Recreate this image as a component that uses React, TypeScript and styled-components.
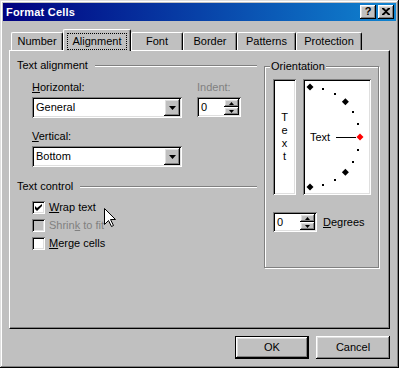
import styled, { createGlobalStyle } from "styled-components";

const GlobalStyle = createGlobalStyle`
  html, body {
    margin: 0;
    padding: 0;
    background: #c0c0c0;
  }
  body {
    font-family: "Liberation Sans", Arial, sans-serif;
    font-size: 11px;
  }
`;

const TABS = [
  { label: "Number", width: 52 },
  { label: "Alignment", width: 68, active: true },
  { label: "Font", width: 52 },
  { label: "Border", width: 54 },
  { label: "Patterns", width: 59 },
  { label: "Protection", width: 66 },
];

// dial marks every 15 degrees, from top (-90) to bottom (+90)
const DIAL = { cx: 5, cy: 56, r: 50 };
const marks = Array.from({ length: 13 }, (_, i) => {
  const a = ((-90 + i * 15) * Math.PI) / 180;
  return {
    x: DIAL.cx + DIAL.r * Math.cos(a),
    y: DIAL.cy + DIAL.r * Math.sin(a),
    big: i % 3 === 0,
    red: i === 6,
  };
});

export default function App() {
  return (
    <>
      <GlobalStyle />
      <Window>
        <TitleBar>
          <Title>Format Cells</Title>
          <TitleButtons>
            <TitleButton>?</TitleButton>
            <TitleButton>
              <svg width="8" height="7" viewBox="0 0 8 7">
                <path d="M0 0h2l2 2 2-2h2v1L5 3.5 8 6v1H6L4 5 2 7H0V6l3-2.5L0 1z" fill="#000" />
              </svg>
            </TitleButton>
          </TitleButtons>
        </TitleBar>

        <Body>
          <TabRow>
            {TABS.map((t) => (
              <Tab key={t.label} $width={t.width} $active={!!t.active}>
                {t.active ? <Focus>{t.label}</Focus> : t.label}
              </Tab>
            ))}
          </TabRow>

          <Panel>
            <LeftCol>
              <SectionHeader>
                <span>Text alignment</span>
                <Rule />
              </SectionHeader>

              <FieldsRow>
                <Field>
                  <Label>
                    <u>H</u>orizontal:
                  </Label>
                  <Select $width={150}>
                    <SelectText>General</SelectText>
                    <DropButton>
                      <svg width="7" height="4" viewBox="0 0 7 4">
                        <polygon points="0,0 7,0 3.5,4" fill="#000" />
                      </svg>
                    </DropButton>
                  </Select>
                </Field>
                <Field>
                  <Label $disabled>Indent:</Label>
                  <Spin value="0" />
                </Field>
              </FieldsRow>

              <Field $top={12}>
                <Label>
                  <u>V</u>ertical:
                </Label>
                <Select $width={150}>
                  <SelectText>Bottom</SelectText>
                  <DropButton>
                    <svg width="7" height="4" viewBox="0 0 7 4">
                      <polygon points="0,0 7,0 3.5,4" fill="#000" />
                    </svg>
                  </DropButton>
                </Select>
              </Field>

              <SectionHeader $top={13}>
                <span>Text control</span>
                <Rule />
              </SectionHeader>

              <CheckList>
                <CheckRow>
                  <CheckBox>
                    <svg width="7" height="7" viewBox="0 0 7 7">
                      <path d="M0 2v3l2 2 5-5V-0L2 4z" fill="#000" />
                    </svg>
                  </CheckBox>
                  <span>
                    <u>W</u>rap text
                  </span>
                </CheckRow>
                <CheckRow $disabled>
                  <CheckBox $disabled />
                  <span>
                    Shrin<u>k</u> to fit
                  </span>
                </CheckRow>
                <CheckRow>
                  <CheckBox />
                  <span>
                    <u>M</u>erge cells
                  </span>
                </CheckRow>
              </CheckList>
            </LeftCol>

            <GroupBox>
              <Legend>Orientation</Legend>
              <OrientRow>
                <VerticalBox>
                  <span>T</span>
                  <span>e</span>
                  <span>x</span>
                  <span>t</span>
                </VerticalBox>
                <DialBox>
                  <svg width="64" height="112" viewBox="0 0 64 112">
                    {marks.map((m, i) =>
                      m.big ? (
                        <polygon
                          key={i}
                          points={`${m.x},${m.y - 3.5} ${m.x + 3.5},${m.y} ${m.x},${m.y + 3.5} ${m.x - 3.5},${m.y}`}
                          fill={m.red ? "#ff0000" : "#000"}
                        />
                      ) : (
                        <rect key={i} x={Math.round(m.x) - 1} y={Math.round(m.y) - 1} width="2" height="2" fill="#000" />
                      )
                    )}
                    <text
                      x="5"
                      y="60"
                      fontFamily="Liberation Sans, Arial, sans-serif"
                      fontSize="11"
                      fill="#000"
                    >
                      Text
                    </text>
                    <rect x="31" y="56" width="20" height="1" fill="#000" />
                  </svg>
                </DialBox>
              </OrientRow>
              <DegreesRow>
                <Spin value="0" />
                <span>
                  <u>D</u>egrees
                </span>
              </DegreesRow>
            </GroupBox>
          </Panel>

          <ButtonRow>
            <PushButton $default>OK</PushButton>
            <PushButton>Cancel</PushButton>
          </ButtonRow>
        </Body>

        <Cursor width="12" height="19" viewBox="0 0 12 19">
          <path
            d="M0.5 0.5V16.5L4.5 12.5L7.5 18.5L9.5 17.5L6.5 11.5H11.5Z"
            fill="#fff"
            stroke="#000"
            strokeWidth="1"
          />
        </Cursor>
      </Window>
    </>
  );
}

function Spin({ value }: { value: string }) {
  return (
    <SpinField>
      <SpinText>{value}</SpinText>
      <SpinButtons>
        <SpinButton>
          <svg width="5" height="3" viewBox="0 0 5 3">
            <polygon points="2.5,0 5,3 0,3" fill="#000" />
          </svg>
        </SpinButton>
        <SpinButton>
          <svg width="5" height="3" viewBox="0 0 5 3">
            <polygon points="0,0 5,0 2.5,3" fill="#000" />
          </svg>
        </SpinButton>
      </SpinButtons>
    </SpinField>
  );
}

const raised = `
  background: #c0c0c0;
  box-shadow: inset -1px -1px #000, inset 1px 1px #fff,
    inset -2px -2px #808080, inset 2px 2px #dfdfdf;
`;

const sunken = `
  box-shadow: inset 1px 1px #808080, inset -1px -1px #fff,
    inset 2px 2px #000, inset -2px -2px #dfdfdf;
`;

const Window = styled.div`
  position: relative;
  width: 399px;
  height: 368px;
  box-sizing: border-box;
  padding: 3px;
  display: flex;
  flex-direction: column;
  background: #c0c0c0;
  color: #000;
  font-family: "Liberation Sans", Arial, sans-serif;
  font-size: 11px;
  line-height: 13px;
  box-shadow: inset -1px -1px #000, inset 1px 1px #dfdfdf,
    inset -2px -2px #808080, inset 2px 2px #fff;
  overflow: hidden;
`;

const TitleBar = styled.div`
  height: 18px;
  flex: none;
  display: flex;
  align-items: center;
  padding: 0 2px 0 3px;
  background: linear-gradient(to right, #000080, #1084d0);
`;

const Title = styled.div`
  color: #fff;
  font-weight: bold;
  font-size: 11px;
  letter-spacing: 0.2px;
`;

const TitleButtons = styled.div`
  margin-left: auto;
  display: flex;
  gap: 2px;
`;

const TitleButton = styled.div`
  width: 16px;
  height: 14px;
  box-sizing: border-box;
  display: flex;
  align-items: center;
  justify-content: center;
  font-weight: bold;
  font-size: 11px;
  padding-bottom: 1px;
  ${raised}
`;

const Body = styled.div`
  flex: 1;
  display: flex;
  flex-direction: column;
  padding: 7px 6px 6px;
`;

const TabRow = styled.div`
  height: 22px;
  display: flex;
  align-items: flex-end;
  padding-left: 2px;
  position: relative;
  z-index: 1;
`;

const Tab = styled.div<{ $width: number; $active: boolean }>`
  width: ${(p) => p.$width}px;
  height: ${(p) => (p.$active ? 22 : 18)}px;
  margin-bottom: ${(p) => (p.$active ? -1 : 0)}px;
  padding-top: ${(p) => (p.$active ? 1 : 0)}px;
  box-sizing: border-box;
  display: flex;
  align-items: center;
  justify-content: center;
  background: #c0c0c0;
  border-left: 1px solid #fff;
  border-top: 1px solid #fff;
  border-right: 1px solid #000;
  border-radius: 2px 2px 0 0;
  box-shadow: inset -1px 0 #808080;
`;

const Focus = styled.span`
  padding: 1px 5px;
  border: 1px dotted #000;
`;

const Panel = styled.div`
  height: 279px;
  flex: none;
  box-sizing: border-box;
  display: flex;
  gap: 7px;
  padding: 8px 0 0 7px;
  border-left: 1px solid #fff;
  border-top: 1px solid #fff;
  border-right: 1px solid #000;
  border-bottom: 1px solid #000;
  box-shadow: inset -1px -1px #808080;
`;

const LeftCol = styled.div`
  width: 240px;
  display: flex;
  flex-direction: column;
`;

const SectionHeader = styled.div<{ $top?: number }>`
  display: flex;
  align-items: center;
  height: 13px;
  margin-top: ${(p) => p.$top ?? 0}px;
`;

const Rule = styled.div`
  flex: 1;
  margin-left: 7px;
  border-top: 1px solid #808080;
  border-bottom: 1px solid #fff;
`;

const FieldsRow = styled.div`
  display: flex;
  gap: 15px;
  margin-top: 9px;
  padding-left: 15px;
`;

const Field = styled.div<{ $top?: number }>`
  display: flex;
  flex-direction: column;
  gap: 3px;
  margin-top: ${(p) => p.$top ?? 0}px;
  padding-left: ${(p) => (p.$top ? 15 : 0)}px;
`;

const Label = styled.div<{ $disabled?: boolean }>`
  height: 13px;
  color: ${(p) => (p.$disabled ? "#808080" : "#000")};
`;

const Select = styled.div<{ $width: number }>`
  width: ${(p) => p.$width}px;
  height: 21px;
  box-sizing: border-box;
  padding: 2px;
  display: flex;
  background: #fff;
  ${sunken}
`;

const SelectText = styled.div`
  flex: 1;
  display: flex;
  align-items: center;
  padding-left: 2px;
`;

const DropButton = styled.div`
  width: 16px;
  height: 17px;
  box-sizing: border-box;
  display: flex;
  align-items: center;
  justify-content: center;
  ${raised}
`;

const SpinField = styled.div`
  width: 44px;
  height: 20px;
  box-sizing: border-box;
  padding: 2px;
  display: flex;
  background: #fff;
  ${sunken}
`;

const SpinText = styled.div`
  flex: 1;
  display: flex;
  align-items: center;
  padding-left: 2px;
`;

const SpinButtons = styled.div`
  width: 15px;
  display: flex;
  flex-direction: column;
`;

const SpinButton = styled.div`
  flex: 1;
  display: flex;
  align-items: center;
  justify-content: center;
  ${raised}
`;

const CheckList = styled.div`
  display: flex;
  flex-direction: column;
  gap: 5px;
  margin-top: 8px;
  padding-left: 15px;
`;

const CheckRow = styled.div<{ $disabled?: boolean }>`
  display: flex;
  align-items: center;
  gap: 4px;
  height: 13px;
  color: ${(p) => (p.$disabled ? "#808080" : "#000")};
`;

const CheckBox = styled.div<{ $disabled?: boolean }>`
  width: 13px;
  height: 13px;
  box-sizing: border-box;
  display: flex;
  align-items: center;
  justify-content: center;
  background: ${(p) => (p.$disabled ? "#c0c0c0" : "#fff")};
  ${sunken}
`;

const GroupBox = styled.div`
  position: relative;
  width: 115px;
  height: 202px;
  margin-top: 7px;
  box-sizing: border-box;
  padding: 12px 0 0 8px;
  border: 1px solid #808080;
  box-shadow: inset 1px 1px #fff, 1px 1px #fff;
`;

const Legend = styled.span`
  position: absolute;
  top: -7px;
  left: 5px;
  padding: 0 1px;
  background: #c0c0c0;
`;

const OrientRow = styled.div`
  display: flex;
  gap: 7px;
`;

const VerticalBox = styled.div`
  width: 23px;
  height: 116px;
  box-sizing: border-box;
  display: flex;
  flex-direction: column;
  align-items: center;
  justify-content: center;
  background: #fff;
  ${sunken}
`;

const DialBox = styled.div`
  width: 68px;
  height: 116px;
  box-sizing: border-box;
  padding: 2px;
  background: #fff;
  ${sunken}
  svg {
    display: block;
  }
`;

const DegreesRow = styled.div`
  display: flex;
  align-items: center;
  gap: 6px;
  margin-top: 17px;
`;

const ButtonRow = styled.div`
  display: flex;
  justify-content: flex-end;
  gap: 7px;
  margin-top: 7px;
`;

const PushButton = styled.div<{ $default?: boolean }>`
  width: 74px;
  height: 23px;
  box-sizing: border-box;
  display: flex;
  align-items: center;
  justify-content: center;
  border: ${(p) => (p.$default ? "1px solid #000" : "none")};
  ${raised}
`;

const Cursor = styled.svg`
  position: absolute;
  left: 104px;
  top: 208px;
`;
